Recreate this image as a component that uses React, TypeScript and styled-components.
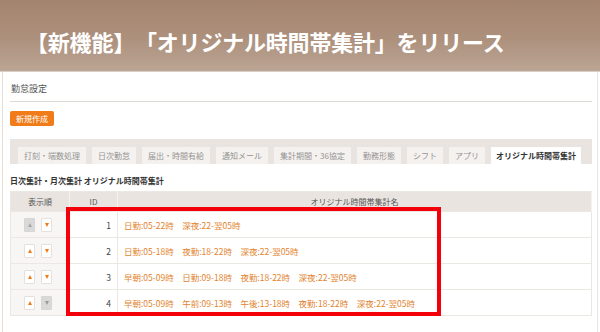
import styled, { createGlobalStyle } from 'styled-components';

const GlobalStyle = createGlobalStyle`
  html, body {
    margin: 0;
    padding: 0;
    background: #fff;
  }
  body {
    width: 600px;
    height: 332px;
    overflow: hidden;
    font-family: "Noto Sans CJK JP", "Noto Sans", sans-serif;
  }
`;

export const Banner = styled.header`
  height: 72px;
  background: linear-gradient(180deg, #a4846e 0%, #ad917d 55%, #bba594 100%);
  display: flex;
  align-items: center;
  padding: 0 0 0 26px;
  box-sizing: border-box;
  border-bottom: 1px solid #d9cfc7;
`;

export const BannerTitle = styled.h1`
  margin: 0;
  color: #fff;
  font-size: 22px;
  font-weight: 700;
  letter-spacing: -0.2px;
  line-height: 1;
  padding-top: 10px;
  white-space: nowrap;
  text-spacing-trim: space-all;
`;

export const Frame = styled.div`
  padding: 0 2px;
`;

export const Panel = styled.main`
  border-left: 1px solid #e6ddd5;
  border-right: 1px solid #e9e6e3;
  padding: 5px 5px 20px 7px;
  height: 260px;
  box-sizing: border-box;
`;

export const PageTitle = styled.div`
  font-size: 9px;
  line-height: 24px;
  color: #555;
  padding-left: 1px;
  border-bottom: 1px solid #dedad6;
`;

export const PrimaryButton = styled.button`
  display: block;
  margin-top: 9px;
  height: 15px;
  width: 44px;
  padding: 0;
  border: none;
  border-radius: 2px;
  background: #f07b18;
  color: #fff;
  font-family: inherit;
  font-size: 8px;
  line-height: 15px;
`;

export const TabBar = styled.nav`
  margin-top: 13px;
  height: 25px;
  box-sizing: border-box;
  padding: 8px 0 0 8px;
  background: #e9e4e0;
  display: flex;
  align-items: flex-end;
  gap: 6px;
`;

export const Tab = styled.div<{ $active?: boolean }>`
  height: 17px;
  padding: 0 ${(p) => (p.$active ? 5 : 6)}px;
  background: ${(p) => (p.$active ? '#fff' : '#f4f1ee')};
  color: ${(p) => (p.$active ? '#333' : '#949494')};
  font-size: 8px;
  font-weight: ${(p) => (p.$active ? 700 : 400)};
  line-height: 17px;
  white-space: nowrap;
`;

export const SectionTitle = styled.h2`
  margin: 10px 0 0;
  font-size: 8px;
  font-weight: 700;
  line-height: 14px;
  color: #333;
`;

export const TableArea = styled.div`
  position: relative;
  margin-top: 3px;
`;

export const Table = styled.table`
  width: 100%;
  border-collapse: collapse;
  table-layout: fixed;
  border: 1px solid #ebe7e3;
`;

export const HeadCell = styled.th<{ $w?: number }>`
  width: ${(p) => (p.$w ? `${p.$w}px` : 'auto')};
  height: 19px;
  padding: 0;
  background: #e9e4e0;
  color: #555;
  font-size: 8px;
  font-weight: 400;
  text-align: center;
  border-right: 1px solid #f4f1ee;
`;

export const Cell = styled.td<{ $align?: string; $shade?: boolean }>`
  height: 25px;
  padding: 0 6px;
  font-size: 8.5px;
  color: #444;
  text-align: ${(p) => p.$align || 'left'};
  background: ${(p) => (p.$shade ? '#f8f6f4' : '#fff')};
  border-top: 1px solid #ebe7e3;
  border-right: 1px solid #ebe7e3;
  white-space: nowrap;
`;

export const Arrows = styled.div`
  display: flex;
  justify-content: center;
  gap: 6px;
  padding-right: 4px;
`;

export const ArrowBtn = styled.span<{ $off?: boolean }>`
  width: 11px;
  height: 14px;
  box-sizing: border-box;
  border: 1px solid ${(p) => (p.$off ? '#d6d6d6' : '#e3e0dd')};
  background: ${(p) => (p.$off ? '#d9d9d9' : '#fff')};
  border-radius: 1px;
  display: flex;
  align-items: center;
  justify-content: center;
`;

export const Tri = styled.span<{ $down?: boolean; $off?: boolean }>`
  width: 0;
  height: 0;
  border-left: 2.5px solid transparent;
  border-right: 2.5px solid transparent;
  ${(p) =>
    p.$down
      ? `border-top: 4px solid ${p.$off ? '#9a9a9a' : '#f07b18'};`
      : `border-bottom: 4px solid ${p.$off ? '#a8a8a8' : '#f07b18'};`}
`;

export const SlotName = styled.span`
  color: #e2832e;
  & + &::before {
    content: '　';
  }
`;

export const Highlight = styled.div`
  position: absolute;
  left: 56px;
  top: 16px;
  width: 375px;
  height: 109px;
  box-sizing: border-box;
  border: 4px solid #f4000a;
  pointer-events: none;
`;

const tabs = [
  '打刻・端数処理',
  '日次勤怠',
  '届出・時間有給',
  '通知メール',
  '集計期間・36協定',
  '勤務形態',
  'シフト',
  'アプリ',
];

const rows = [
  { id: 1, up: false, down: true, slots: ['日勤:05-22時', '深夜:22-翌05時'] },
  { id: 2, up: true, down: true, slots: ['日勤:05-18時', '夜勤:18-22時', '深夜:22-翌05時'] },
  {
    id: 3,
    up: true,
    down: true,
    slots: ['早朝:05-09時', '日勤:09-18時', '夜勤:18-22時', '深夜:22-翌05時'],
  },
  {
    id: 4,
    up: true,
    down: false,
    slots: ['早朝:05-09時', '午前:09-13時', '午後:13-18時', '夜勤:18-22時', '深夜:22-翌05時'],
  },
];

export default function App() {
  return (
    <>
      <GlobalStyle />
      <Banner>
        <BannerTitle>【新機能】「オリジナル時間帯集計」をリリース</BannerTitle>
      </Banner>
      <Frame>
        <Panel>
          <PageTitle>勤怠設定</PageTitle>
          <PrimaryButton>新規作成</PrimaryButton>
          <TabBar>
            {tabs.map((t) => (
              <Tab key={t}>{t}</Tab>
            ))}
            <Tab $active>オリジナル時間帯集計</Tab>
          </TabBar>
          <SectionTitle>日次集計・月次集計 オリジナル時間帯集計</SectionTitle>
          <TableArea>
            <Table>
              <thead>
                <tr>
                  <HeadCell $w={58}>表示順</HeadCell>
                  <HeadCell $w={47}>ID</HeadCell>
                  <HeadCell>オリジナル時間帯集計名</HeadCell>
                </tr>
              </thead>
              <tbody>
                {rows.map((r) => (
                  <tr key={r.id}>
                    <Cell $shade>
                      <Arrows>
                        <ArrowBtn $off={!r.up}>
                          <Tri $off={!r.up} />
                        </ArrowBtn>
                        <ArrowBtn $off={!r.down}>
                          <Tri $down $off={!r.down} />
                        </ArrowBtn>
                      </Arrows>
                    </Cell>
                    <Cell $align="right">{r.id}</Cell>
                    <Cell>
                      {r.slots.map((s, i) => (
                        <SlotName key={i}>{s}</SlotName>
                      ))}
                    </Cell>
                  </tr>
                ))}
              </tbody>
            </Table>
            <Highlight />
          </TableArea>
        </Panel>
      </Frame>
    </>
  );
}
